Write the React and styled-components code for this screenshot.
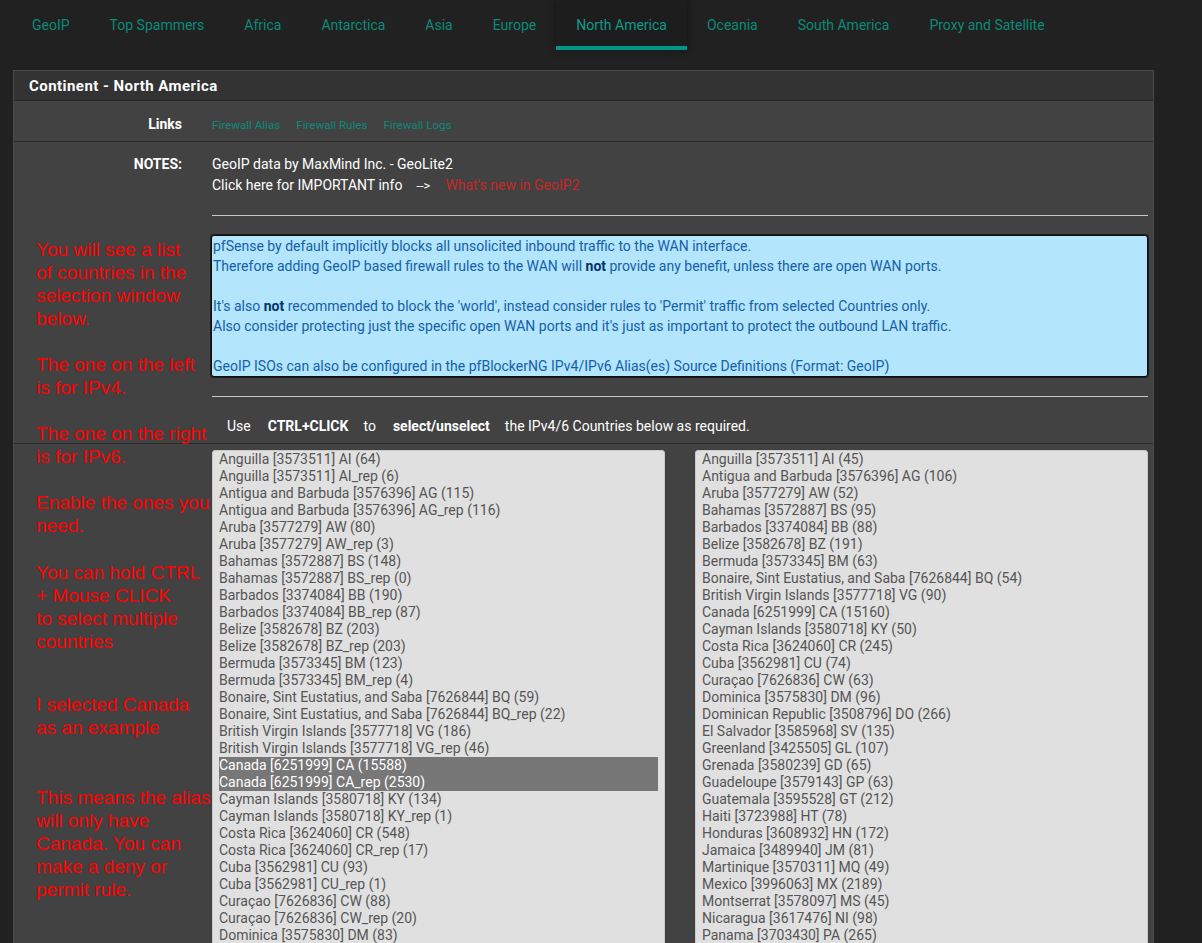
import React from "react";
import styled, { createGlobalStyle } from "styled-components";

const GlobalStyle = createGlobalStyle`
  html, body {
    margin: 0;
    padding: 0;
    background: #212121;
    font-family: Roboto, "Liberation Sans", sans-serif;
    overflow: hidden;
  }
`;

const Page = styled.div`
  position: relative;
  padding: 0 12px;
  height: 943px;
  overflow: hidden;
`;

const TabBar = styled.nav`
  display: flex;
  height: 50px;
  align-items: stretch;
`;

const Tab = styled.a`
  display: flex;
  align-items: center;
  padding: 4px 20px 0;
  font-size: 14px;
  color: ${({ $active }) => ($active ? "#0f9a89" : "#0b8a79")};
  text-decoration: none;
  background: ${({ $active }) => ($active ? "#1d1d1d" : "transparent")};
  box-shadow: ${({ $active }) => ($active ? "0 0 8px rgba(0,0,0,0.45)" : "none")};
  border-bottom: 4px solid ${({ $active }) => ($active ? "#009688" : "transparent")};
  box-sizing: border-box;
`;

const Panel = styled.section`
  margin: 20px 0 0 1px;
  width: 1139px;
  border: 1px solid #4a4a4a;
  border-bottom: none;
  background: #424242;
`;

const PanelHeading = styled.h2`
  margin: 0;
  height: 29px;
  line-height: 30px;
  padding: 0 15px;
  background: #333333;
  border-bottom: 1px solid #262626;
  color: #ffffff;
  font-size: 15px;
  font-weight: 700;
  letter-spacing: 0.45px;
`;

const Row = styled.div`
  display: grid;
  grid-template-columns: 184px 1fr;
  border-bottom: ${({ $last }) => ($last ? "none" : "1px solid #2a2a2a")};
  padding: ${({ $pad }) => $pad || "0"};
`;

const Label = styled.div`
  text-align: right;
  padding-right: 16px;
  color: #ffffff;
  font-weight: 700;
  font-size: 14px;
  line-height: ${({ $lh }) => $lh || "20px"};
`;

const Content = styled.div`
  padding: 0 5px 0 14px;
  color: #ffffff;
  font-size: 14px;
  line-height: 21px;
`;

const LinkList = styled.div`
  display: flex;
  gap: 16px;
  font-size: 11.6px;
  line-height: 20px;
  padding-top: 1px;
`;

const TealLink = styled.a`
  color: #0b8a79;
  text-decoration: none;
`;

const RedLink = styled.a`
  color: #c62828;
  text-decoration: none;
  margin-left: 15px;
`;

const Arrow = styled.span`
  margin-left: 14px;
  font-size: 13px;
`;

const Rule = styled.hr`
  margin: ${({ $m }) => $m};
  border: none;
  border-top: 1px solid #c8c8c8;
  height: 0;
`;

const InfoBox = styled.div`
  background: #b3e5fc;
  border: 1px solid #0d0d0d;
  box-shadow: 0 0 0 1px rgba(0, 0, 0, 0.55);
  border-radius: 3px;
  color: #1560a8;
  font-size: 14px;
  line-height: 20px;
  padding: 0 0 0 1px;
  margin-left: -1px;
  b {
    color: #07326a;
  }
`;

const Blank = styled.div`
  height: 20px;
`;

const UsageLine = styled.div`
  display: flex;
  font-size: 14px;
  line-height: 20px;
  padding-left: 15px;
  color: #ffffff;
  span {
    margin-right: 17px;
  }
  b {
    margin-right: 15px;
  }
`;

const Lists = styled.div`
  display: flex;
  gap: 30px;
`;

const Select = styled.div`
  flex: 1;
  height: 520px;
  background: #e0e0e0;
  border: 1px solid #c9c9c9;
  border-radius: 3px;
  padding: 0 6px;
  font-size: 14px;
  line-height: 17px;
  color: #555555;
  overflow: hidden;
`;

const Option = styled.div`
  white-space: nowrap;
  background: ${({ $selected }) => ($selected ? "#777777" : "transparent")};
  color: ${({ $selected }) => ($selected ? "#ffffff" : "inherit")};
`;

const Annotation = styled.div`
  position: absolute;
  left: 36px;
  top: 238px;
  width: 190px;
  color: #ff0000;
  font-family: "Liberation Sans", Arial, sans-serif;
  font-size: 19px;
  line-height: 23px;
  pointer-events: none;
`;

const Note = styled.p`
  margin: ${({ $gap }) => $gap}px 0 0;
  white-space: pre-line;
`;

const tabs = [
  "GeoIP",
  "Top Spammers",
  "Africa",
  "Antarctica",
  "Asia",
  "Europe",
  "North America",
  "Oceania",
  "South America",
  "Proxy and Satellite",
];

const ipv4 = [
  "Anguilla [3573511] AI (64)",
  "Anguilla [3573511] AI_rep (6)",
  "Antigua and Barbuda [3576396] AG (115)",
  "Antigua and Barbuda [3576396] AG_rep (116)",
  "Aruba [3577279] AW (80)",
  "Aruba [3577279] AW_rep (3)",
  "Bahamas [3572887] BS (148)",
  "Bahamas [3572887] BS_rep (0)",
  "Barbados [3374084] BB (190)",
  "Barbados [3374084] BB_rep (87)",
  "Belize [3582678] BZ (203)",
  "Belize [3582678] BZ_rep (203)",
  "Bermuda [3573345] BM (123)",
  "Bermuda [3573345] BM_rep (4)",
  "Bonaire, Sint Eustatius, and Saba [7626844] BQ (59)",
  "Bonaire, Sint Eustatius, and Saba [7626844] BQ_rep (22)",
  "British Virgin Islands [3577718] VG (186)",
  "British Virgin Islands [3577718] VG_rep (46)",
  "Canada [6251999] CA (15588)",
  "Canada [6251999] CA_rep (2530)",
  "Cayman Islands [3580718] KY (134)",
  "Cayman Islands [3580718] KY_rep (1)",
  "Costa Rica [3624060] CR (548)",
  "Costa Rica [3624060] CR_rep (17)",
  "Cuba [3562981] CU (93)",
  "Cuba [3562981] CU_rep (1)",
  "Curaçao [7626836] CW (88)",
  "Curaçao [7626836] CW_rep (20)",
  "Dominica [3575830] DM (83)",
];

const ipv6 = [
  "Anguilla [3573511] AI (45)",
  "Antigua and Barbuda [3576396] AG (106)",
  "Aruba [3577279] AW (52)",
  "Bahamas [3572887] BS (95)",
  "Barbados [3374084] BB (88)",
  "Belize [3582678] BZ (191)",
  "Bermuda [3573345] BM (63)",
  "Bonaire, Sint Eustatius, and Saba [7626844] BQ (54)",
  "British Virgin Islands [3577718] VG (90)",
  "Canada [6251999] CA (15160)",
  "Cayman Islands [3580718] KY (50)",
  "Costa Rica [3624060] CR (245)",
  "Cuba [3562981] CU (74)",
  "Curaçao [7626836] CW (63)",
  "Dominica [3575830] DM (96)",
  "Dominican Republic [3508796] DO (266)",
  "El Salvador [3585968] SV (135)",
  "Greenland [3425505] GL (107)",
  "Grenada [3580239] GD (65)",
  "Guadeloupe [3579143] GP (63)",
  "Guatemala [3595528] GT (212)",
  "Haiti [3723988] HT (78)",
  "Honduras [3608932] HN (172)",
  "Jamaica [3489940] JM (81)",
  "Martinique [3570311] MQ (49)",
  "Mexico [3996063] MX (2189)",
  "Montserrat [3578097] MS (45)",
  "Nicaragua [3617476] NI (98)",
  "Panama [3703430] PA (265)",
];

const notes = [
  { gap: 0, text: "You will see a list\nof countries in the\nselection window\nbelow." },
  { gap: 23, text: "The one on the left\nis for IPv4." },
  { gap: 23, text: "The one on the right\nis for IPv6." },
  { gap: 23, text: "Enable the ones you\nneed." },
  { gap: 24, text: "You can hold CTRL\n+ Mouse CLICK\nto select multiple\ncountries" },
  { gap: 40, text: "I selected Canada\nas an example" },
  { gap: 47, text: "This means the alias\nwill only have\nCanada. You can\nmake a deny or\npermit rule." },
];

const selected = ["Canada [6251999] CA (15588)", "Canada [6251999] CA_rep (2530)"];

export default function App() {
  return (
    <>
      <GlobalStyle />
      <Page>
        <TabBar>
          {tabs.map((t) => (
            <Tab key={t} $active={t === "North America"}>
              {t}
            </Tab>
          ))}
        </TabBar>

        <Panel>
          <PanelHeading>Continent - North America</PanelHeading>

          <Row $pad="13px 0 6px">
            <Label>Links</Label>
            <Content>
              <LinkList>
                <TealLink>Firewall Alias</TealLink>
                <TealLink>Firewall Rules</TealLink>
                <TealLink>Firewall Logs</TealLink>
              </LinkList>
            </Content>
          </Row>

          <Row $pad="12px 0 7px">
            <Label $lh="21px">NOTES:</Label>
            <Content>
              <div>GeoIP data by MaxMind Inc. - GeoLite2</div>
              <div>
                Click here for IMPORTANT info
                <Arrow>--&gt;</Arrow>
                <RedLink>What's new in GeoIP2</RedLink>
              </div>
              <Rule $m="19px 0 19px" />
              <InfoBox>
                <div>pfSense by default implicitly blocks all unsolicited inbound traffic to the WAN interface.</div>
                <div>
                  Therefore adding GeoIP based firewall rules to the WAN will <b>not</b> provide any benefit, unless there are open WAN ports.
                </div>
                <Blank />
                <div>
                  It's also <b>not</b> recommended to block the 'world', instead consider rules to 'Permit' traffic from selected Countries only.
                </div>
                <div>Also consider protecting just the specific open WAN ports and it's just as important to protect the outbound LAN traffic.</div>
                <Blank />
                <div>GeoIP ISOs can also be configured in the pfBlockerNG IPv4/IPv6 Alias(es) Source Definitions (Format: GeoIP)</div>
              </InfoBox>
              <Rule $m="19px 0 19px" />
              <UsageLine>
                <span>Use</span>
                <b>CTRL+CLICK</b>
                <span>to</span>
                <b>select/unselect</b>
                <span>the IPv4/6 Countries below as required.</span>
              </UsageLine>
            </Content>
          </Row>

          <Row $pad="6px 0 0" $last>
            <Label />
            <Content>
              <Lists>
                <Select>
                  {ipv4.map((c) => (
                    <Option key={c} $selected={selected.includes(c)}>
                      {c}
                    </Option>
                  ))}
                </Select>
                <Select>
                  {ipv6.map((c) => (
                    <Option key={c}>{c}</Option>
                  ))}
                </Select>
              </Lists>
            </Content>
          </Row>
        </Panel>

        <Annotation>
          {notes.map((n, i) => (
            <Note key={i} $gap={n.gap}>
              {n.text}
            </Note>
          ))}
        </Annotation>
      </Page>
    </>
  );
}
